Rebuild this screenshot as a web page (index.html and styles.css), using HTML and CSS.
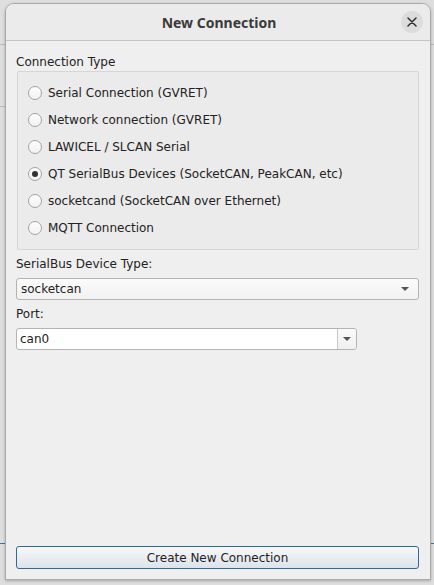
FILE: index.html
```html
<!DOCTYPE html>
<html>
<head>
<meta charset="utf-8">
<link rel="stylesheet" href="styles.css">
</head>
<body>
<div class="backdrop">
  <div class="dialog">
    <div class="header">
      <span class="title">New Connection</span>
      <span class="close">
        <svg width="10" height="10" viewBox="0 0 10 10"><path d="M1 1 L9 9 M9 1 L1 9" stroke="#2e2e2e" stroke-width="1.5" stroke-linecap="round"/></svg>
      </span>
    </div>
    <div class="body">
      <div class="label first">Connection Type</div>
      <div class="group">
        <label class="radio"><span class="dot"></span>Serial Connection (GVRET)</label>
        <label class="radio"><span class="dot"></span>Network connection (GVRET)</label>
        <label class="radio"><span class="dot"></span>LAWICEL / SLCAN Serial</label>
        <label class="radio"><span class="dot checked"></span>QT SerialBus Devices (SocketCAN, PeakCAN, etc)</label>
        <label class="radio"><span class="dot"></span>socketcand (SocketCAN over Ethernet)</label>
        <label class="radio"><span class="dot"></span>MQTT Connection</label>
      </div>
      <div class="label">SerialBus Device Type:</div>
      <div class="combo">
        <span class="combo-text">socketcan</span>
        <span class="arrow"></span>
      </div>
      <div class="label">Port:</div>
      <div class="editcombo">
        <span class="edit-text">can0</span>
        <span class="edit-btn"><span class="arrow"></span></span>
      </div>
      <div class="spacer"></div>
      <div class="button">Create New Connection</div>
    </div>
  </div>
</div>
</body>
</html>
```
FILE: styles.css
```css
html, body {
  margin: 0;
  padding: 0;
}
body {
  width: 434px;
  height: 585px;
  overflow: hidden;
  background: #d9d9d9;
  font-family: "DejaVu Sans", sans-serif;
  font-size: 12px;
  color: #222;
}
.backdrop {
  width: 434px;
  height: 585px;
  box-sizing: border-box;
  padding: 3px 3px 5px 5px;
  background:
    linear-gradient(#bcbcbc, #bcbcbc) 0 44px / 5px 1px no-repeat,
    linear-gradient(#bcbcbc, #bcbcbc) 0 106px / 5px 1px no-repeat,
    linear-gradient(#bcbcbc, #bcbcbc) 429px 44px / 5px 1px no-repeat,
    linear-gradient(#3f73a0, #3f73a0) 0 543px / 5px 1px no-repeat,
    linear-gradient(#3f73a0, #3f73a0) 429px 543px / 5px 1px no-repeat,
    #dedede;
}
.dialog {
  height: 100%;
  box-sizing: border-box;
  border: 1px solid #a9a9a9;
  border-radius: 9px 9px 0 0;
  background: #efefef;
  display: flex;
  flex-direction: column;
  overflow: hidden;
  box-shadow: 0 1px 3px rgba(0,0,0,0.25);
}
.header {
  height: 36px;
  flex: none;
  background: #ebebeb;
  border-bottom: 1px solid #c4c4c4;
  display: flex;
  align-items: center;
  justify-content: center;
  position: relative;
}
.title {
  font-family: "Noto Sans", sans-serif;
  font-weight: bold;
  font-size: 14px;
  color: #3a3a3a;
  margin-left: 2px;
}
.close {
  position: absolute;
  right: 7px;
  top: 7px;
  width: 22px;
  height: 22px;
  border-radius: 50%;
  background: #dcdcdc;
  display: flex;
  align-items: center;
  justify-content: center;
}
.body {
  flex: 1;
  display: flex;
  flex-direction: column;
  padding: 0 11px 10px 10px;
}
.label {
  height: 14px;
  line-height: 14px;
  margin: 7px 0 7px 0;
}
.label.first {
  margin-top: 14px;
  margin-bottom: 2px;
}
.group {
  height: 179px;
  box-sizing: border-box;
  border: 1px solid #d6d6d6;
  border-radius: 2px;
  background: #ebebeb;
  margin-left: 1px;
  padding: 14px 0 0 10px;
  display: flex;
  flex-direction: column;
  gap: 13px;
}
.radio {
  display: flex;
  align-items: center;
  height: 14px;
  line-height: 14px;
}
.dot {
  width: 14px;
  height: 14px;
  box-sizing: border-box;
  border: 1px solid #a3a3a3;
  border-radius: 50%;
  background: linear-gradient(#fdfdfd, #f2f2f2);
  margin-right: 6px;
  display: flex;
  align-items: center;
  justify-content: center;
}
.dot.checked::after {
  content: "";
  width: 6px;
  height: 6px;
  border-radius: 50%;
  background: #333;
}
.combo {
  height: 22px;
  box-sizing: border-box;
  border: 1px solid #b4b4b4;
  border-radius: 3px;
  background: linear-gradient(#fbfbfb, #f1f1f1);
  display: flex;
  align-items: center;
  justify-content: space-between;
  padding: 0 9px 0 4px;
}
.arrow {
  width: 0;
  height: 0;
  border-left: 4px solid transparent;
  border-right: 4px solid transparent;
  border-top: 4px solid #555;
}
.editcombo {
  width: 341px;
  height: 22px;
  box-sizing: border-box;
  border: 1px solid #b4b4b4;
  border-radius: 3px;
  background: #fff;
  display: flex;
  align-items: center;
}
.edit-text {
  flex: 1;
  padding-left: 3px;
}
.edit-btn {
  width: 18px;
  height: 100%;
  border-left: 1px solid #c8c8c8;
  background: linear-gradient(#fafafa, #f0f0f0);
  display: flex;
  align-items: center;
  justify-content: center;
  border-radius: 0 3px 3px 0;
}
.spacer {
  flex: 1;
}
.button {
  height: 23px;
  box-sizing: border-box;
  border: 1px solid #2f6a9c;
  border-radius: 3px;
  background: linear-gradient(#f7f8f9, #dde3ea);
  display: flex;
  align-items: center;
  justify-content: center;
  color: #1e1e1e;
  font-size: 12px;
}
```
